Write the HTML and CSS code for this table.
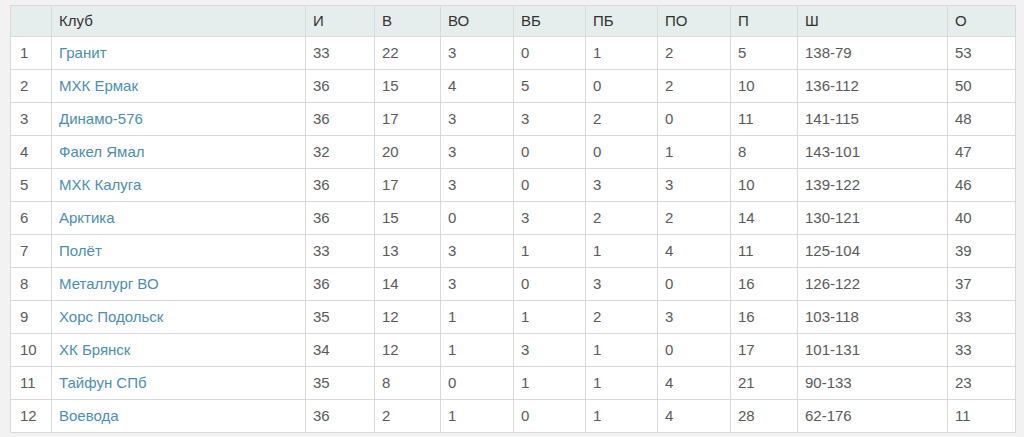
FILE: index.html
```html
<!DOCTYPE html>
<html lang="ru">
<head>
<meta charset="utf-8">
<title>Таблица</title>
<link rel="stylesheet" href="styles.css">
</head>
<body>
<div class="wrap">
<table class="standings">
<colgroup>
<col class="c-pos"><col class="c-club"><col class="c-i"><col class="c-v"><col class="c-vo"><col class="c-vb"><col class="c-pb"><col class="c-po"><col class="c-p"><col class="c-sh"><col class="c-o">
</colgroup>
<thead>
<tr><th></th><th>Клуб</th><th>И</th><th>В</th><th>ВО</th><th>ВБ</th><th>ПБ</th><th>ПО</th><th>П</th><th>Ш</th><th>О</th></tr>
</thead>
<tbody>
<tr><td>1</td><td><a href="#">Гранит</a></td><td>33</td><td>22</td><td>3</td><td>0</td><td>1</td><td>2</td><td>5</td><td>138-79</td><td>53</td></tr>
<tr><td>2</td><td><a href="#">МХК Ермак</a></td><td>36</td><td>15</td><td>4</td><td>5</td><td>0</td><td>2</td><td>10</td><td>136-112</td><td>50</td></tr>
<tr><td>3</td><td><a href="#">Динамо-576</a></td><td>36</td><td>17</td><td>3</td><td>3</td><td>2</td><td>0</td><td>11</td><td>141-115</td><td>48</td></tr>
<tr><td>4</td><td><a href="#">Факел Ямал</a></td><td>32</td><td>20</td><td>3</td><td>0</td><td>0</td><td>1</td><td>8</td><td>143-101</td><td>47</td></tr>
<tr><td>5</td><td><a href="#">МХК Калуга</a></td><td>36</td><td>17</td><td>3</td><td>0</td><td>3</td><td>3</td><td>10</td><td>139-122</td><td>46</td></tr>
<tr><td>6</td><td><a href="#">Арктика</a></td><td>36</td><td>15</td><td>0</td><td>3</td><td>2</td><td>2</td><td>14</td><td>130-121</td><td>40</td></tr>
<tr><td>7</td><td><a href="#">Полёт</a></td><td>33</td><td>13</td><td>3</td><td>1</td><td>1</td><td>4</td><td>11</td><td>125-104</td><td>39</td></tr>
<tr><td>8</td><td><a href="#">Металлург ВО</a></td><td>36</td><td>14</td><td>3</td><td>0</td><td>3</td><td>0</td><td>16</td><td>126-122</td><td>37</td></tr>
<tr><td>9</td><td><a href="#">Хорс Подольск</a></td><td>35</td><td>12</td><td>1</td><td>1</td><td>2</td><td>3</td><td>16</td><td>103-118</td><td>33</td></tr>
<tr><td>10</td><td><a href="#">ХК Брянск</a></td><td>34</td><td>12</td><td>1</td><td>3</td><td>1</td><td>0</td><td>17</td><td>101-131</td><td>33</td></tr>
<tr><td>11</td><td><a href="#">Тайфун СПб</a></td><td>35</td><td>8</td><td>0</td><td>1</td><td>1</td><td>4</td><td>21</td><td>90-133</td><td>23</td></tr>
<tr><td>12</td><td><a href="#">Воевода</a></td><td>36</td><td>2</td><td>1</td><td>0</td><td>1</td><td>4</td><td>28</td><td>62-176</td><td>11</td></tr>
</tbody>
</table>
</div>
</body>
</html>
```

FILE: styles.css
```css
html, body {
  margin: 0;
  padding: 0;
  background: #f2f2f2;
}
body {
  font-family: "Liberation Sans", Arial, sans-serif;
  font-size: 15px;
  color: #5a5a5a;
}
.wrap {
  padding: 5px 0 0 10px;
}
.standings {
  width: 1005px;
  table-layout: fixed;
  border-collapse: collapse;
  background: #fff;
}
.standings th,
.standings td {
  border: 1px solid #d9d9d9;
  text-align: left;
  line-height: 20px;
  white-space: nowrap;
}
.standings th {
  background: #e6eded;
  color: #333;
  font-weight: normal;
  padding: 5px 7px;
}
.standings td {
  padding: 6px 7px;
}
.standings td:first-child {
  padding-left: 9px;
}
.standings a {
  color: #4a8fb3;
  text-decoration: none;
}
.c-pos { width: 41px; }
.c-club { width: 254px; }
.c-i { width: 69px; }
.c-v { width: 66px; }
.c-vo { width: 73px; }
.c-vb { width: 72px; }
.c-pb { width: 72px; }
.c-po { width: 73px; }
.c-p { width: 67px; }
.c-sh { width: 150px; }
.c-o { width: 68px; }
```
